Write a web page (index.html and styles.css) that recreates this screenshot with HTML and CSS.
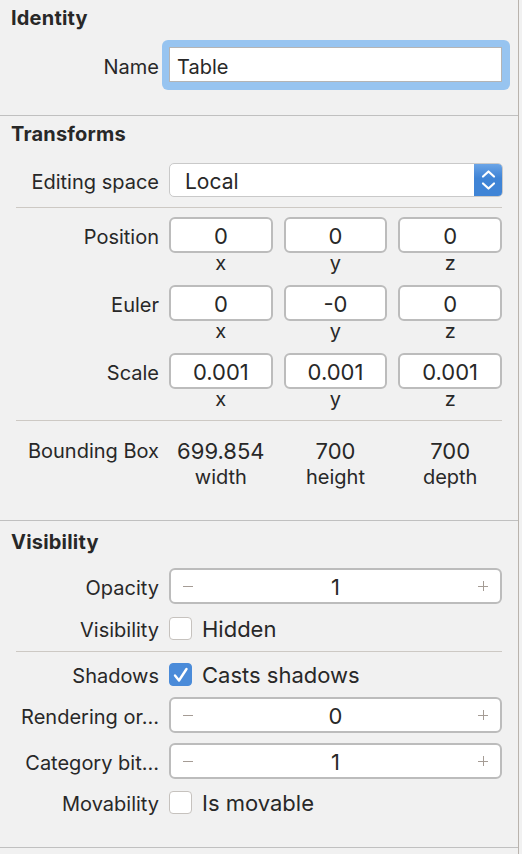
FILE: index.html
```html
<!DOCTYPE html>
<html>
<head>
<meta charset="utf-8">
<title>Inspector</title>
<link rel="stylesheet" href="styles.css">
</head>
<body>
<div class="panel">
  <section class="sec sec-identity">
    <h2 class="sec-title">Identity</h2>
    <div class="row row-name">
      <span class="lbl">Name</span>
      <div class="focus-ring"><div class="textfield">Table</div></div>
    </div>
  </section>

  <section class="sec sec-transforms">
    <h2 class="sec-title">Transforms</h2>
    <div class="row row-popup">
      <span class="lbl">Editing space</span>
      <div class="popup">
        <span class="popup-value">Local</span>
        <span class="popup-arrows">
          <svg width="29" height="34" viewBox="0 0 29 34"><polyline points="9,13.5 14.5,8.5 20,13.5" fill="none" stroke="#fff" stroke-width="2.2" stroke-linecap="round" stroke-linejoin="round"/><polyline points="9,20.5 14.5,25.5 20,20.5" fill="none" stroke="#fff" stroke-width="2.2" stroke-linecap="round" stroke-linejoin="round"/></svg>
        </span>
      </div>
    </div>
    <div class="sep"></div>

    <div class="row row-vec row-first">
      <span class="lbl">Position</span>
      <div class="triple">
        <div class="cell"><div class="box">0</div><div class="axis">x</div></div>
        <div class="cell"><div class="box">0</div><div class="axis">y</div></div>
        <div class="cell"><div class="box">0</div><div class="axis">z</div></div>
      </div>
    </div>
    <div class="row row-vec">
      <span class="lbl">Euler</span>
      <div class="triple">
        <div class="cell"><div class="box">0</div><div class="axis">x</div></div>
        <div class="cell"><div class="box">-0</div><div class="axis">y</div></div>
        <div class="cell"><div class="box">0</div><div class="axis">z</div></div>
      </div>
    </div>
    <div class="row row-vec">
      <span class="lbl">Scale</span>
      <div class="triple">
        <div class="cell"><div class="box">0.001</div><div class="axis">x</div></div>
        <div class="cell"><div class="box">0.001</div><div class="axis">y</div></div>
        <div class="cell"><div class="box">0.001</div><div class="axis">z</div></div>
      </div>
    </div>
    <div class="sep sep-bbox"></div>

    <div class="row row-bbox">
      <span class="lbl">Bounding Box</span>
      <div class="triple">
        <div class="cell"><div class="bval">699.854</div><div class="bdim">width</div></div>
        <div class="cell"><div class="bval">700</div><div class="bdim">height</div></div>
        <div class="cell"><div class="bval">700</div><div class="bdim">depth</div></div>
      </div>
    </div>
  </section>

  <section class="sec sec-visibility">
    <h2 class="sec-title">Visibility</h2>
    <div class="row row-stepper row-opacity">
      <span class="lbl">Opacity</span>
      <div class="stepper">
        <span class="step-minus"></span>
        <span class="step-value">1</span>
        <span class="step-plus"></span>
      </div>
    </div>
    <div class="row row-check row-hidden">
      <span class="lbl">Visibility</span>
      <span class="checkbox"></span>
      <span class="check-text">Hidden</span>
    </div>
    <div class="sep sep-vis"></div>
    <div class="row row-check row-shadows">
      <span class="lbl">Shadows</span>
      <span class="checkbox checked">
        <svg width="23" height="23" viewBox="0 0 23 23"><polyline points="6,12.5 10,17.5 17.5,6" fill="none" stroke="#fff" stroke-width="2.4" stroke-linecap="round" stroke-linejoin="round"/></svg>
      </span>
      <span class="check-text">Casts shadows</span>
    </div>
    <div class="row row-stepper">
      <span class="lbl">Rendering or…</span>
      <div class="stepper">
        <span class="step-minus"></span>
        <span class="step-value">0</span>
        <span class="step-plus"></span>
      </div>
    </div>
    <div class="row row-stepper">
      <span class="lbl">Category bit…</span>
      <div class="stepper">
        <span class="step-minus"></span>
        <span class="step-value">1</span>
        <span class="step-plus"></span>
      </div>
    </div>
    <div class="row row-check row-movable">
      <span class="lbl">Movability</span>
      <span class="checkbox"></span>
      <span class="check-text">Is movable</span>
    </div>
  </section>
</div>
</body>
</html>
```

FILE: styles.css
```css
* { box-sizing: border-box; }

html, body {
  margin: 0;
  padding: 0;
  background: #f1f1f1;
}

body {
  width: 522px;
  height: 854px;
  overflow: hidden;
  font-family: Inter, "Helvetica Neue", "Liberation Sans", Arial, sans-serif;
  font-size: 20px;
  color: #282828;
}

.panel {
  width: 519px;
  height: 854px;
  border-right: 1px solid #b9b3ad;
}

.sec {
  border-bottom: 1px solid #c0c0c0;
}

.sec-identity { height: 116px; padding-top: 6px; }
.sec-transforms { height: 405px; padding-top: 6px; }
.sec-visibility { height: 327px; padding-top: 9px; }

.sec-title {
  margin: 0;
  padding-left: 11px;
  font-size: 20px;
  font-weight: 700;
  letter-spacing: 0.2px;
  line-height: 25px;
  height: 25px;
}

.row {
  display: flex;
  align-items: center;
}

.lbl {
  flex: none;
  width: 159px;
  text-align: right;
  white-space: nowrap;
  padding-top: 3px;
}

/* Identity */
.row-name {
  margin-top: 9px;
  height: 50px;
}
.focus-ring {
  margin-left: 3px;
  width: 348px;
  height: 50px;
  padding: 7px 8px 8px 7px;
  background: #97c4f0;
  border-radius: 6px;
}
.textfield {
  height: 35px;
  background: #fff;
  border: 1px solid #b4b4b4;
  padding: 4px 0 0 7px;
  display: flex;
  align-items: center;
}

/* Popup */
.row-popup {
  margin-top: 16px;
  height: 34px;
}
.popup {
  margin-left: 10px;
  width: 334px;
  height: 34px;
  display: flex;
  background: #fff;
  border: 1px solid #c9c9c9;
  border-radius: 5px;
  overflow: hidden;
}
.popup-value {
  flex: 1;
  display: flex;
  align-items: center;
  padding: 2px 0 0 15px;
  font-size: 21px;
}
.popup-arrows {
  flex: none;
  width: 29px;
  margin: -1px -1px -1px 0;
  height: 34px;
  background: linear-gradient(#6ea7e8 0%, #4d8edb 30%, #3f84d6 45%, #3f84d6 100%);
  border-radius: 0 5px 5px 0;
}
.popup-arrows svg { display: block; }

.sep {
  margin: 10px 0 0 16px;
  width: 486px;
  height: 1px;
  background: #cdc9c4;
}

/* Vector rows */
.row-vec {
  align-items: flex-start;
  margin-top: 12px;
}
.row-vec.row-first { margin-top: 9px; }
.row-vec .lbl {
  line-height: 36px;
  padding-top: 2px;
}
.triple {
  margin-left: 10px;
  width: 333px;
  display: grid;
  grid-template-columns: repeat(3, 1fr);
  column-gap: 11px;
}
.cell {
  display: flex;
  flex-direction: column;
  align-items: center;
}
.box {
  width: 100%;
  height: 36px;
  background: #fff;
  border: 2px solid #bcbcbc;
  border-radius: 6px;
  text-align: center;
  font-size: 22px;
  line-height: 32px;
  padding-top: 1px;
}
.axis {
  line-height: 20px;
  height: 20px;
}

.sep-bbox { margin-top: 11px; }

.row-bbox {
  align-items: flex-start;
  margin-top: 17px;
}
.row-bbox .lbl { line-height: 26px; padding-top: 0; }
.bval, .bdim {
  line-height: 26px;
  text-align: center;
}
.bval { font-size: 22px; }

/* Visibility */
.row-stepper {
  height: 36px;
  margin-top: 10px;
}
.row-opacity { margin-top: 13px; }
.stepper {
  margin-left: 10px;
  width: 333px;
  height: 36px;
  background: #fff;
  border: 2px solid #bcbcbc;
  border-radius: 6px;
  display: flex;
  align-items: center;
  padding: 0 12px;
}
.step-minus, .step-plus {
  flex: none;
  width: 10px;
  height: 10px;
  position: relative;
}
.step-minus::before, .step-plus::before, .step-plus::after {
  content: "";
  position: absolute;
  background: #a59c95;
}
.step-minus::before, .step-plus::before {
  left: 0;
  top: 4.5px;
  width: 10px;
  height: 1px;
}
.step-plus::after {
  left: 4.5px;
  top: 0;
  width: 1px;
  height: 10px;
}
.step-value {
  flex: 1;
  text-align: center;
  font-size: 22px;
  padding-top: 2px;
}

.row-check {
  height: 26px;
  margin-top: 10px;
}
.row-hidden { margin-top: 11px; }
.row-shadows { margin-top: 9px; }
.sep-vis { margin-top: 10px; }

.checkbox {
  flex: none;
  margin-left: 10px;
  width: 23px;
  height: 23px;
  background: #fff;
  border: 1px solid #c6c2be;
  border-radius: 4px;
}
.checkbox.checked {
  background: #4a8bd9;
  border-color: #4a8bd9;
}
.checkbox.checked svg {
  display: block;
  margin: -1px;
}
.check-text {
  margin-left: 10px;
  padding-top: 2px;
  font-size: 22px;
}
```
